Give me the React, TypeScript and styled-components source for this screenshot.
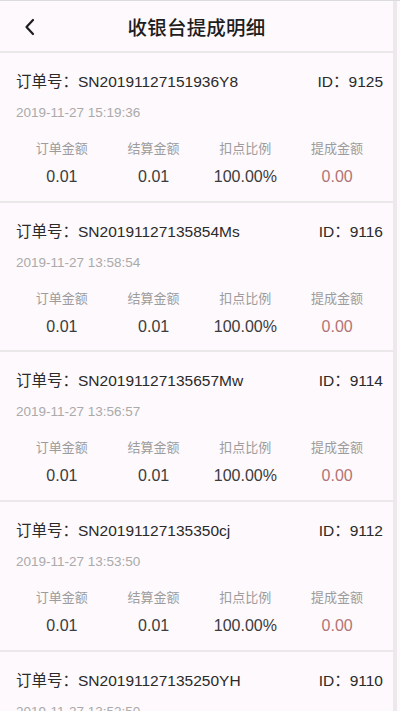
import React from 'react';
import styled, { createGlobalStyle } from 'styled-components';

const GlobalStyle = createGlobalStyle`
	html, body {
		margin: 0;
		padding: 0;
		background: #fdf9fc;
		font-family: "Liberation Sans", "Noto Sans CJK SC", sans-serif;
	}
`;

const Screen = styled.div`
	display: flex;
	width: 400px;
	height: 711px;
	overflow: hidden;
	border-top: 1px solid #dcdcdc;
	box-sizing: border-box;
	background: #fdf9fc;
`;

const Main = styled.div`
	flex: 0 0 393px;
	display: flex;
	flex-direction: column;
`;

const ScrollTrack = styled.div`
	flex: 0 0 4px;
	background: #ebe9ea;
`;

const Header = styled.header`
	display: flex;
	align-items: center;
	justify-content: center;
	position: relative;
	height: 50px;
	flex-shrink: 0;
	border-bottom: 2px solid #ebe8ea;
`;

const BackButton = styled.button`
	position: absolute;
	left: 18px;
	top: 14px;
	width: 24px;
	height: 24px;
	padding: 0;
	border: none;
	background: none;
	display: flex;
	align-items: center;
	justify-content: center;
`;

const Title = styled.h1`
	margin: 0;
	font-size: 19.5px;
	font-weight: 500;
	color: #1e1e1e;
	letter-spacing: 0.2px;
`;

const Card = styled.div`
	flex-shrink: 0;
	height: 149.7px;
	padding: 16px 10px 0 16px;
	box-sizing: border-box;
	border-bottom: 2px solid #ebe8ea;
`;

const OrderRow = styled.div`
	display: flex;
	justify-content: space-between;
	align-items: center;
	height: 22px;
	font-size: 15.5px;
	color: #2a2a2a;
`;

const DateLine = styled.div`
	margin-top: 12px;
	height: 20px;
	line-height: 20px;
	font-size: 13.5px;
	color: #aaa;
`;

const Stats = styled.div`
	display: grid;
	grid-template-columns: repeat(4, 1fr);
	margin-top: 17px;
	text-align: center;
`;

const StatLabel = styled.div`
	font-size: 13px;
	line-height: 18px;
	color: #9c9c9c;
`;

const StatValue = styled.div<{ $accent?: boolean }>`
	margin-top: 9px;
	font-size: 16px;
	line-height: 20px;
	color: ${(p) => (p.$accent ? '#b27474' : '#3c3c3c')};
`;

interface Record {
	sn: string;
	id: number;
	time: string;
}

const records: Record[] = [
	{ sn: 'SN20191127151936Y8', id: 9125, time: '2019-11-27 15:19:36' },
	{ sn: 'SN20191127135854Ms', id: 9116, time: '2019-11-27 13:58:54' },
	{ sn: 'SN20191127135657Mw', id: 9114, time: '2019-11-27 13:56:57' },
	{ sn: 'SN20191127135350cj', id: 9112, time: '2019-11-27 13:53:50' },
	{ sn: 'SN20191127135250YH', id: 9110, time: '2019-11-27 13:52:50' },
];

const stats = [
	{ label: '订单金额', value: '0.01' },
	{ label: '结算金额', value: '0.01' },
	{ label: '扣点比例', value: '100.00%' },
	{ label: '提成金额', value: '0.00', accent: true },
];

export default function App() {
	return (
		<>
			<GlobalStyle />
			<Screen>
				<Main>
					<Header>
						<BackButton aria-label="返回">
							<svg width="14" height="18" viewBox="0 0 14 18" fill="none">
								<path d="M10 2 L3.5 9 L10 16" stroke="#1e1e1e" strokeWidth="2.2" strokeLinecap="round" strokeLinejoin="round" />
							</svg>
						</BackButton>
						<Title>收银台提成明细</Title>
					</Header>
					{records.map((r) => (
						<Card key={r.id}>
							<OrderRow>
								<span>订单号：{r.sn}</span>
								<span>ID：{r.id}</span>
							</OrderRow>
							<DateLine>{r.time}</DateLine>
							<Stats>
								{stats.map((s) => (
									<div key={s.label}>
										<StatLabel>{s.label}</StatLabel>
										<StatValue $accent={s.accent}>{s.value}</StatValue>
									</div>
								))}
							</Stats>
						</Card>
					))}
				</Main>
				<ScrollTrack />
			</Screen>
		</>
	);
}
